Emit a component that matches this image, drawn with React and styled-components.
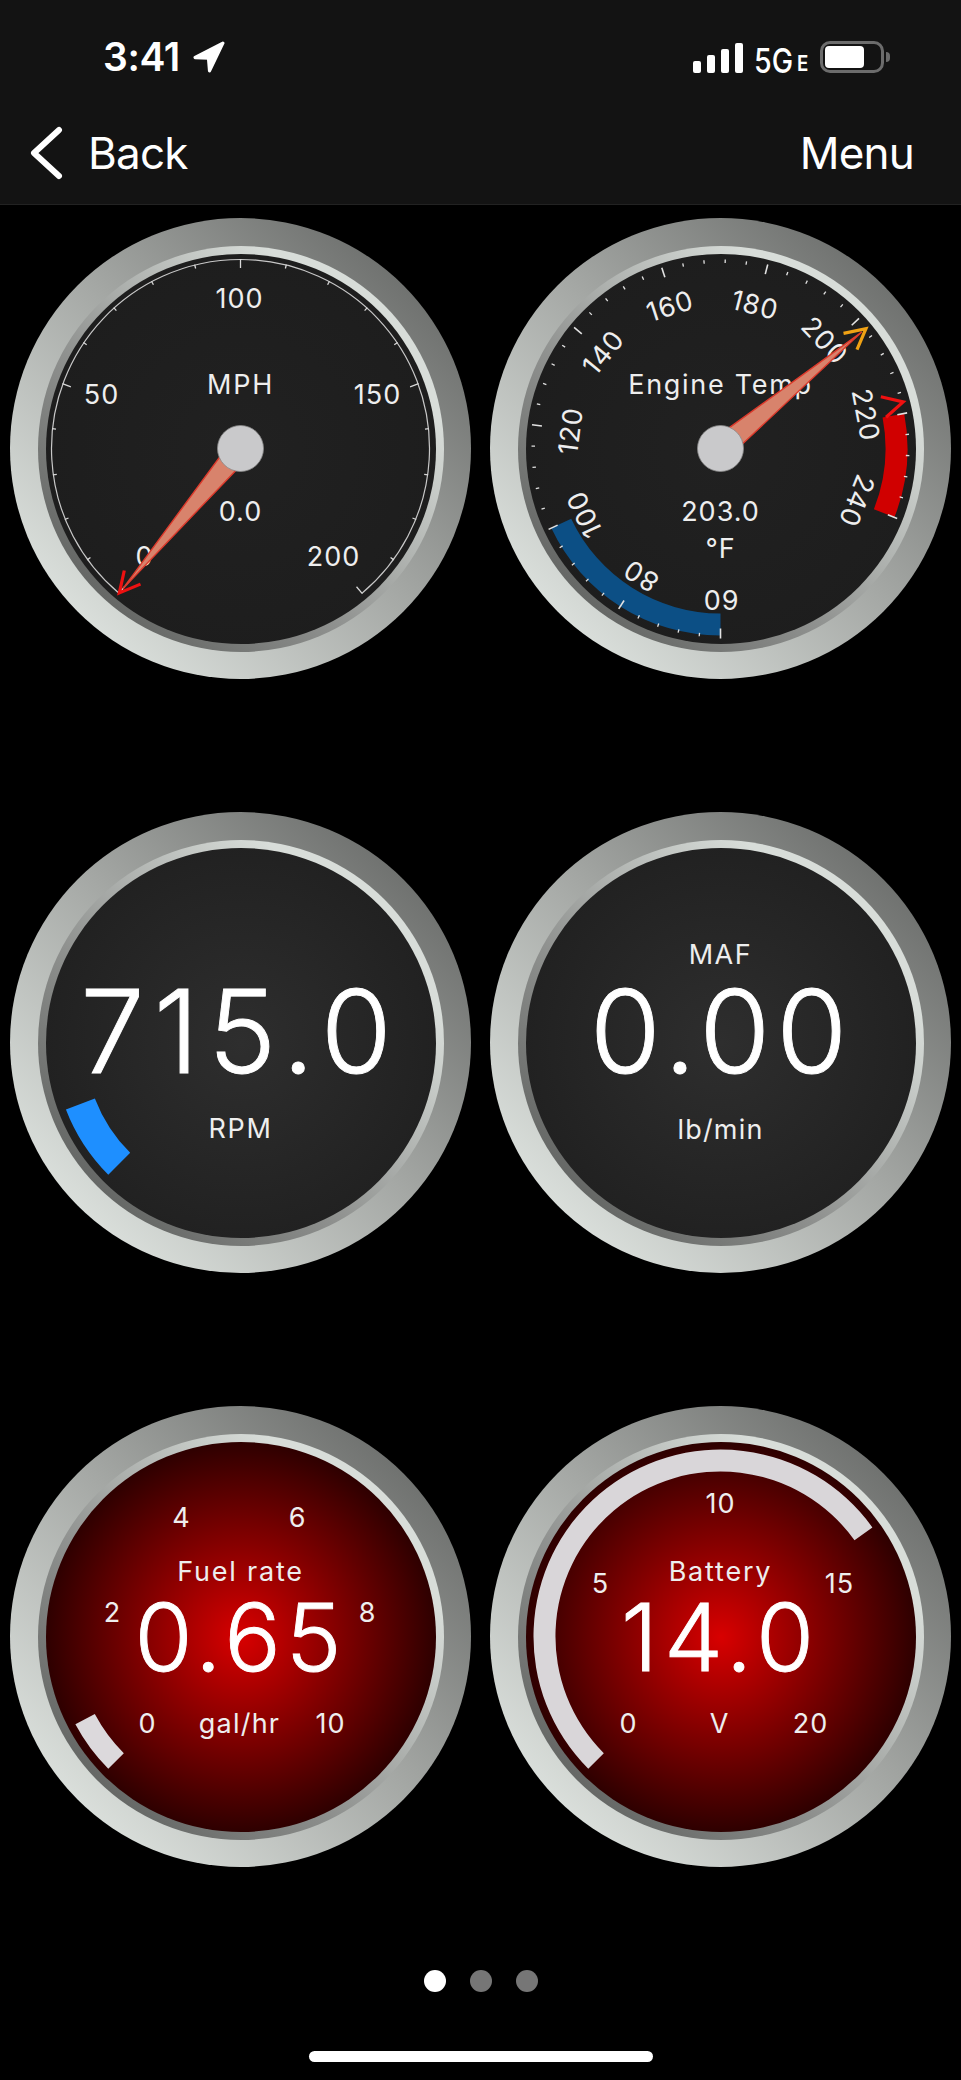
import React from 'react';
import styled, { createGlobalStyle } from 'styled-components';

const Global = createGlobalStyle`
  html, body { margin: 0; padding: 0; background: #000; }
  body { font-family: Inter, "Noto Sans", sans-serif; color: #fff; }
`;

const Screen = styled.div`
  width: 961px;
  height: 2080px;
  background: #000;
  display: flex;
  flex-direction: column;
  overflow: hidden;
`;

const Header = styled.header`
  height: 204px;
  background: #131313;
  border-bottom: 1px solid #222;
  box-sizing: content-box;
  display: flex;
  flex-direction: column;
`;

const StatusBar = styled.div`
  height: 115px;
  padding: 40px 77px 0 103px;
  box-sizing: border-box;
  display: flex;
  justify-content: space-between;
  align-items: flex-start;
`;

const TimeGroup = styled.div`
  display: flex;
  align-items: center;
  gap: 13px;
  height: 34px;
`;

const Time = styled.span`
  font-size: 39px;
  font-weight: 600;
  line-height: 34px;
  letter-spacing: -0.4px;
`;

const StatusIcons = styled.div`
  display: flex;
  align-items: flex-end;
  height: 33px;
`;

const SignalBars = styled.div`
  display: flex;
  align-items: flex-end;
  gap: 6px;
  margin-right: 11px;
`;

const Bar = styled.span`
  width: 8px;
  height: ${p => p.$h}px;
  background: #fff;
  border-radius: 2px;
`;

const Network = styled.span`
  font-size: 34px;
  font-weight: 500;
  line-height: 25px;
  height: 25px;
  width: 38px;
  display: inline-block;
  transform: scaleX(0.84);
  transform-origin: left center;
  white-space: nowrap;
`;

const NetworkSuffix = styled.span`
  font-size: 22px;
  font-weight: 600;
  line-height: 16px;
  width: 11px;
  margin: 0 12px 2px 5px;
  transform: scaleX(0.85);
  transform-origin: left center;
`;

const Battery = styled.div`
  width: 64px;
  height: 32px;
  box-sizing: border-box;
  border: 3px solid #6c6c6c;
  border-radius: 10px;
  padding: 2px;
  display: flex;
  position: relative;
`;

const BatteryFill = styled.span`
  width: 39px;
  background: #fff;
  border-radius: 4px;
`;

const BatteryNub = styled.span`
  position: absolute;
  right: -9px;
  top: 8px;
  width: 4px;
  height: 10px;
  background: #6c6c6c;
  border-radius: 0 4px 4px 0;
`;

const NavBar = styled.nav`
  flex: 1;
  padding: 0 47px 14px 29px;
  display: flex;
  justify-content: space-between;
  align-items: center;
`;

const NavAction = styled.span`
  display: flex;
  align-items: center;
  gap: 25px;
  font-size: 44px;
  line-height: 52px;
  font-weight: 400;
  letter-spacing: -0.8px;
`;

const GaugeGrid = styled.main`
  margin-top: 13px;
  padding-left: 10px;
  display: grid;
  grid-template-columns: 461px 461px;
  column-gap: 19px;
  row-gap: 133px;
`;

const Bezel = styled.div`
  position: relative;
  width: 461px;
  height: 461px;
  border-radius: 50%;
  background: linear-gradient(45deg, #dde2de 12%, #a4a7a4 52%, #696b69 90%);
  display: flex;
  align-items: center;
  justify-content: center;
`;

const Ring = styled.div`
  width: 406px;
  height: 406px;
  border-radius: 50%;
  background: linear-gradient(45deg, #666866 15%, #8f918f 40%, #d8ddd9 78%);
  display: flex;
  align-items: center;
  justify-content: center;
`;

const dialTones = {
  flat: 'radial-gradient(circle, #212121 0%, #1c1c1c 100%)',
  glow: 'radial-gradient(circle, #2e2e2e 0%, #1c1c1c 100%)',
  red: 'radial-gradient(circle closest-side, #d80000 0%, #7f0000 52%, #2e0000 100%)',
};

const Dial = styled.div`
  width: 390px;
  height: 390px;
  border-radius: 50%;
  background: ${p => dialTones[p.$tone]};
`;

const Face = styled.svg`
  position: absolute;
  inset: 0;
  width: 461px;
  height: 461px;
`;

const Label = styled.text`
  font-family: Inter, "Noto Sans", sans-serif;
  font-size: 27px;
  font-weight: 400;
  letter-spacing: ${p => p.$track ?? 1}px;
  fill: #eeeeee;
  text-anchor: middle;
  dominant-baseline: central;
`;

const Reading = styled.text`
  font-family: Inter, "Noto Sans", sans-serif;
  font-size: ${p => p.$size}px;
  font-weight: 300;
  letter-spacing: ${p => p.$track}px;
  fill: #fff;
  stroke: #fff;
  stroke-width: 0.9px;
  text-anchor: middle;
  dominant-baseline: central;
`;

const Pager = styled.div`
  margin-top: 103px;
  display: flex;
  justify-content: center;
  gap: 24px;
`;

const PagerDot = styled.span`
  width: 22px;
  height: 22px;
  border-radius: 50%;
  background: ${p => (p.$active ? '#fff' : '#767676')};
`;

const HomeIndicator = styled.div`
  width: 344px;
  height: 11px;
  border-radius: 6px;
  background: #fff;
  margin: 59px auto 0;
`;

const rad = d => (d * Math.PI) / 180;
const pt = (r, a) => [r * Math.sin(rad(a)), -r * Math.cos(rad(a))];
const f = n => n.toFixed(2);

function sector(r0, r1, a0, a1) {
  const [x0, y0] = pt(r1, a0);
  const [x1, y1] = pt(r1, a1);
  const [x2, y2] = pt(r0, a1);
  const [x3, y3] = pt(r0, a0);
  const large = a1 - a0 > 180 ? 1 : 0;
  return `M${f(x0)} ${f(y0)}A${r1} ${r1} 0 ${large} 1 ${f(x1)} ${f(y1)}L${f(x2)} ${f(y2)}A${r0} ${r0} 0 ${large} 0 ${f(x3)} ${f(y3)}Z`;
}

function Tick({ a, r0, r1, color = '#d8d8d8', w = 1.3 }) {
  const [x0, y0] = pt(r0, a);
  const [x1, y1] = pt(r1, a);
  return <line x1={x0} y1={y0} x2={x1} y2={y1} stroke={color} strokeWidth={w} />;
}

function Arrowhead({ a, color }) {
  const p1 = pt(168.5, a - 3.6);
  const tip = pt(188.5, a);
  const p2 = pt(168.5, a + 3.6);
  return (
    <polyline
      points={`${p1.join(',')} ${tip.join(',')} ${p2.join(',')}`}
      fill="none"
      stroke={color}
      strokeWidth="3.2"
    />
  );
}

function Needle({ a, color }) {
  const [tx, ty] = pt(183, a);
  const [b1x, b1y] = pt(23, a - 27);
  const [b2x, b2y] = pt(23, a + 27);
  return (
    <g>
      <polygon
        points={`${b1x},${b1y} ${tx},${ty} ${b2x},${b2y}`}
        fill="#d8836c"
        stroke="#dd3a2c"
        strokeWidth="1.4"
      />
      <Arrowhead a={a} color={color} />
      <circle r="23" fill="#c9c9cb" stroke="#8a8a8a" strokeWidth="0.8" />
    </g>
  );
}

function Gauge({ tone, children }) {
  return (
    <Bezel>
      <Ring>
        <Dial $tone={tone} />
      </Ring>
      <Face viewBox="-230.5 -230.5 461 461">{children}</Face>
    </Bezel>
  );
}

function SpeedGauge() {
  const ticks = [];
  for (let i = 0; i <= 20; i++) {
    const a = -140 + i * 14;
    const major = i % 5 === 0;
    ticks.push(<Tick key={i} a={a} r0={major ? 180.5 : 185.5} r1={189.5} />);
  }
  const [sx, sy] = pt(189, -140);
  const [ex, ey] = pt(189, 140);
  return (
    <Gauge tone="flat">
      <path d={`M${f(sx)} ${f(sy)}A189 189 0 1 1 ${f(ex)} ${f(ey)}`} fill="none" stroke="#c8c8c8" strokeWidth="1.2" />
      {ticks}
      <Label x={-1} y={-150}>100</Label>
      <Label x={-139} y={-54}>50</Label>
      <Label x={137} y={-54}>150</Label>
      <Label x={-96} y={108}>0</Label>
      <Label x={93} y={108}>200</Label>
      <Label x={0} y={-64} $track={1.8}>MPH</Label>
      <Label x={0} y={63}>0.0</Label>
      <Needle a={-140} color="#ee1111" />
    </Gauge>
  );
}

const TEMP_STEP = 32.4;
const TEMP_LABELS = [
  { v: 60, r: 151, a: 180 },
  { v: 80, r: 150, a: 212 },
  { v: 100, r: 151, a: 244.2 },
  { v: 120, r: 151, a: 276.7 },
  { v: 140, r: 151.5, a: 309.3 },
  { v: 160, r: 151, a: 340.5 },
  { v: 180, r: 147.5, a: 373.5 },
  { v: 200, r: 150, a: 404 },
  { v: 220, r: 149, a: 437 },
  { v: 240, r: 146, a: 471 },
];

function TempGauge() {
  const ticks = [];
  for (let i = 0; i <= 45; i++) {
    const a = 180 + i * (TEMP_STEP / 5);
    const major = i % 5 === 0;
    ticks.push(<Tick key={i} a={a} r0={major ? 180 : 185.5} r1={major ? 190 : 189} color="#e2e2e2" w={major ? 1.6 : 1.3} />);
  }
  return (
    <Gauge tone="flat">
      <path d={sector(165, 187, 180, 244.8)} fill="#0c4f85" />
      <path d={sector(165, 187, 79.2, 111.6)} fill="#d00000" />
      {ticks}
      {TEMP_LABELS.map(({ v, r, a }, i) => {
        const [x, y] = pt(r, a);
        return (
          <Label key={v} x={0} y={0} transform={`translate(${f(x)} ${f(y)}) rotate(${180 + i * TEMP_STEP})`}>
            {v}
          </Label>
        );
      })}
      <Label x={0} y={-64} $track={1.7}>Engine Temp</Label>
      <Label x={0} y={63}>203.0</Label>
      <Label x={0} y={100}>°F</Label>
      <Arrowhead a={75.7} color="#f01010" />
      <Needle a={50.5} color="#f0a214" />
    </Gauge>
  );
}

function RpmGauge() {
  return (
    <Gauge tone="glow">
      <path d={sector(156, 187, -135, -111)} fill="#1e8fff" />
      <Reading x={0} y={-11} $size={115} $track={9}>715.0</Reading>
      <Label x={0} y={86} $track={1.6}>RPM</Label>
    </Gauge>
  );
}

function MafGauge() {
  return (
    <Gauge tone="glow">
      <Label x={0} y={-88} $track={1.6}>MAF</Label>
      <Reading x={1} y={-11} $size={115} $track={6}>0.00</Reading>
      <Label x={0} y={87} $track={1.2}>lb/min</Label>
    </Gauge>
  );
}

function FuelGauge() {
  return (
    <Gauge tone="red">
      <path d={sector(165, 187, -135, -118)} fill="#dcd9dc" />
      <Label x={-59} y={-119}>4</Label>
      <Label x={57} y={-119}>6</Label>
      <Label x={-128} y={-24}>2</Label>
      <Label x={127} y={-24}>8</Label>
      <Label x={-93} y={87}>0</Label>
      <Label x={90} y={87}>10</Label>
      <Label x={0} y={-65} $track={1.8}>Fuel rate</Label>
      <Reading x={0} y={0} $size={94} $track={5}>0.65</Reading>
      <Label x={-1} y={87} $track={1.2}>gal/hr</Label>
    </Gauge>
  );
}

function BatteryGauge() {
  return (
    <Gauge tone="red">
      <path d={sector(165, 187, -135, 54.3)} fill="#d9d6d9" />
      <Label x={0} y={-133}>10</Label>
      <Label x={-120} y={-53}>5</Label>
      <Label x={119} y={-53}>15</Label>
      <Label x={-92} y={87}>0</Label>
      <Label x={90} y={87}>20</Label>
      <Label x={-1} y={87}>V</Label>
      <Label x={0} y={-65} $track={1.8}>Battery</Label>
      <Reading x={0} y={0} $size={94} $track={6}>14.0</Reading>
    </Gauge>
  );
}

export default function App() {
  return (
    <Screen>
      <Global />
      <Header>
        <StatusBar>
          <TimeGroup>
            <Time>3:41</Time>
            <svg width="32" height="32" viewBox="0 0 30 30">
              <path d="M28 2 L2 15.5 L14.5 16 L15.5 28 Z" fill="#fff" stroke="#fff" strokeWidth="3" strokeLinejoin="round" />
            </svg>
          </TimeGroup>
          <StatusIcons>
            <SignalBars>
              <Bar $h={12} />
              <Bar $h={18} />
              <Bar $h={24} />
              <Bar $h={30} />
            </SignalBars>
            <Network>5G</Network>
            <NetworkSuffix>E</NetworkSuffix>
            <Battery>
              <BatteryFill />
              <BatteryNub />
            </Battery>
          </StatusIcons>
        </StatusBar>
        <NavBar>
          <NavAction>
            <svg width="34" height="54" viewBox="0 0 34 54">
              <polyline points="30,4 5,27 30,50" fill="none" stroke="#fff" strokeWidth="6" strokeLinecap="round" strokeLinejoin="round" />
            </svg>
            Back
          </NavAction>
          <NavAction>Menu</NavAction>
        </NavBar>
      </Header>
      <GaugeGrid>
        <SpeedGauge />
        <TempGauge />
        <RpmGauge />
        <MafGauge />
        <FuelGauge />
        <BatteryGauge />
      </GaugeGrid>
      <Pager>
        <PagerDot $active />
        <PagerDot />
        <PagerDot />
      </Pager>
      <HomeIndicator />
    </Screen>
  );
}
